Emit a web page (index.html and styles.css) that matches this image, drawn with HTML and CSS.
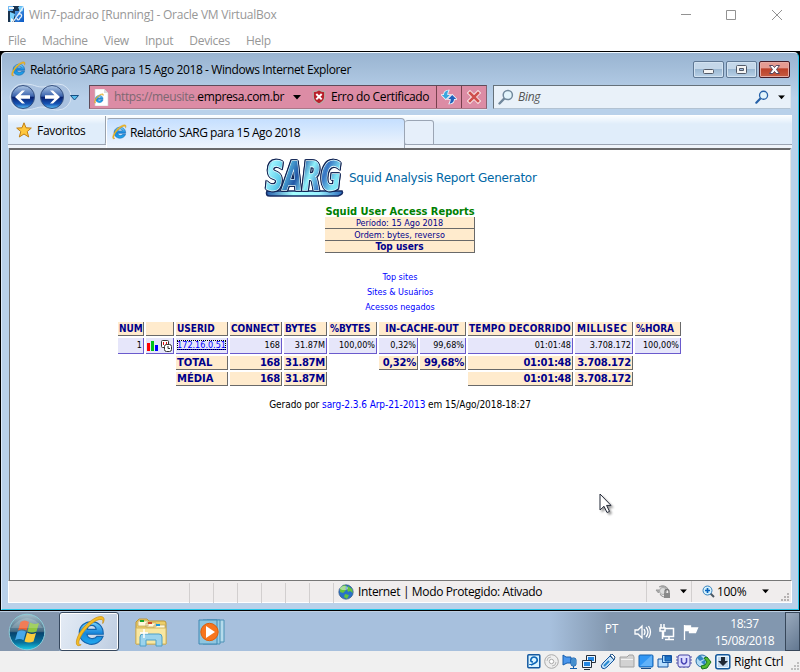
FILE: index.html
```html
<!DOCTYPE html>
<html lang="pt-BR">
<head>
<meta charset="utf-8">
<title>Win7-padrao [Running] - Oracle VM VirtualBox</title>
<link rel="stylesheet" href="styles.css">
</head>
<body>
<svg class="defs" width="0" height="0">
  <defs>
    <linearGradient id="blue" x1="0" y1="0" x2="0" y2="1"><stop offset="0" stop-color="#79d4fb"/><stop offset=".5" stop-color="#1787dc"/><stop offset="1" stop-color="#20a9ee"/></linearGradient>
    <linearGradient id="orb" x1="0" y1="0" x2="0" y2="1"><stop offset="0" stop-color="#b0c9e6"/><stop offset=".47" stop-color="#3a62ad"/><stop offset=".5" stop-color="#081f6e"/><stop offset=".8" stop-color="#1654b5"/><stop offset="1" stop-color="#5fc6fa"/></linearGradient>
    <linearGradient id="start" x1="0" y1="0" x2="0" y2="1"><stop offset="0" stop-color="#a5bdc9"/><stop offset=".48" stop-color="#456b83"/><stop offset=".52" stop-color="#07436d"/><stop offset=".8" stop-color="#08739e"/><stop offset="1" stop-color="#1ccfea"/></linearGradient>
    <linearGradient id="sarg" x1="0" y1="0" x2="1" y2=".25"><stop offset="0" stop-color="#1554a4"/><stop offset=".13" stop-color="#9cf4ff"/><stop offset=".3" stop-color="#5ecaea"/><stop offset=".5" stop-color="#2257a6"/><stop offset=".66" stop-color="#8ff2fb"/><stop offset=".84" stop-color="#3674c4"/><stop offset="1" stop-color="#80e5f5"/></linearGradient>
    <linearGradient id="bar" x1="0" x2="1"><stop offset="0" stop-color="#275baa"/><stop offset=".35" stop-color="#a5ffff"/><stop offset=".7" stop-color="#9af0ff"/><stop offset="1" stop-color="#2869bb"/></linearGradient>
    <linearGradient id="app" x1="0" y1="0" x2="1" y2="1"><stop offset="0" stop-color="#7cc1f6"/><stop offset="1" stop-color="#0758c5"/></linearGradient>
    <symbol id="ie" viewBox="0 0 16 16">
      <path d="M14.600 9.400H6.200c.3 2.700 4 2.800 5.100 1.100h3.200C12.300 16.800 2.300 15.700 2.200 8.500 2.300 1.400 14.700.3 14.600 9.400zM6.300 6.900h4.600C10.600 4.200 6.700 4.100 6.300 6.900z" fill="url(#blue)" stroke="#1665ad" stroke-width=".6" fill-rule="evenodd"/>
      <path d="M3.200 14.800C-.5 17.100-.1 11.200 4.300 6.100 8.100 1.700 13.100-1 14.700.8c.6.8.3 1.900-.4 3.100.2-1.400.1-2-.7-2.100C11 1.200 5.500 5.900 3.100 10.400c-1.500 2.800-1.600 4.700.1 4.400z" fill="#f3bd25" stroke="#c88a0f" stroke-width=".35"/>
    </symbol>
    <symbol id="lens" viewBox="0 0 16 16"><path d="M1.500 14.500L6.400 9.400" fill="none" stroke="currentColor" stroke-width="2.4" stroke-linecap="round"/><circle cx="9.800" cy="6" r="4.600" fill="#e2f4fc" stroke="currentColor" stroke-width="1.500"/></symbol>
    <symbol id="down" viewBox="0 0 8 5"><path d="M0 0h8L4 4.600z"/></symbol>
  </defs>
</svg>

<header class="vm-title">
  <svg class="vm-icon" width="16" height="16" viewBox="0 0 16 16"><path d="M0 0h16v16H0z" fill="url(#app)"/><path d="M0 5h7v11H0zM5 0h6v5H5z" fill="#19334f"/><path d="M2 6l5 2-2 7-3 1zM10 1l5-1v5l-3 1z" fill="#79d0fc"/><path d="M1 1h5v2H1zM3 12l3 2-2 2H3z" fill="#f2f7f9"/><path d="M16 0L5 16M10 9c3-3 5 1 2 3-1 3-3 2-3 0" fill="none" stroke="#e3effa" stroke-width="1.300"/></svg>
  <span class="vm-name">Win7-padrao [Running] - Oracle VM VirtualBox</span>
  <svg class="vm-controls" width="104" height="12" viewBox="0 0 104 12" fill="none" stroke="#929292"><path d="M1 5.500h10M46.500 1.500h9v9h-9zM92 1l10 10M102 1L92 11"/></svg>
</header>
<nav class="vm-menu"><span>File</span><span>Machine</span><span>View</span><span>Input</span><span>Devices</span><span>Help</span></nav>

<main class="guest">
  <section class="browser">
    <div class="win-title">
      <svg width="15" height="16"><use href="#ie"/></svg>
      <span class="win-name">Relatório SARG para 15 Ago 2018 - Windows Internet Explorer</span>
      <div class="win-controls">
        <i class="ctl"><svg width="29" height="15"><rect x="9.500" y="7.500" width="10" height="4" rx="1" fill="#f4f4f4" stroke="#525a68"/></svg></i>
        <i class="ctl"><svg width="29" height="15"><rect x="9.500" y="3.500" width="10" height="8" rx="1" fill="#f4f4f4" stroke="#525a68"/><path d="M12.500 6.500h4v2h-4z" fill="#9dbbe0" stroke="#525a68"/></svg></i>
        <i class="ctl close"><svg width="29" height="15"><path d="M9.500 3.500h3.400L14.500 5.500l1.600-2h3.400l-3 4 3 4h-3.400l-1.600-2-1.600 2H9.500l3-4z" fill="#fff" stroke="#56465f"/></svg></i>
      </div>
    </div>

    <div class="nav">
      <svg class="arrows" width="70" height="28" viewBox="0 0 70 28">
        <path d="M14 1C26 1 26 4 33 4S40 1 49 1a13 13 0 0 1 0 26c-8 0-10-3-16-3s-8 3-19 3A13 13 0 0 1 14 1z" fill="#a9c1df" stroke="#d9e6f4"/>
        <g fill="url(#orb)" stroke="#365180"><circle cx="14" cy="14" r="11.500"/><circle cx="43" cy="14" r="11.500"/></g>
        <path d="M6 14l7-6.500h3l-4.500 4.700H21v3.600h-9.500L16 20.500h-3zM51 14l-7-6.500h-3l4.500 4.700H36v3.600h9.500L41 20.500h3z" fill="#fff"/>
        <path d="M61.500 12.500h8L65.500 17z" fill="#59bdec" stroke="#174f82"/>
      </svg>
      <div class="address">
        <svg class="page-icon" width="15" height="17" viewBox="0 0 15 17"><path d="M1 0h9l4 4v13H1z" fill="#fff" stroke="#ccc" stroke-width=".6"/><path d="M10 0v4h4" fill="#ddd"/><use href="#ie" x="0" y="4" width="10" height="11"/></svg>
        <span class="url"><span>https://meusite.</span>empresa.com.br</span>
        <svg class="url-arrow" width="8" height="5"><use href="#down"/></svg>
        <svg class="shield" width="14" height="16" viewBox="0 0 14 16"><path d="M7 .8c2 1.500 4 1.800 5.800 1.800v5.200c0 3.500-2.200 5.600-5.800 7.400-3.600-1.800-5.800-3.900-5.800-7.400V2.600C3 2.600 5 2.300 7 .8z" fill="#b9202b" stroke="#b9a9a8" stroke-width="1.400"/><path d="M4.300 5l5.400 5.400M9.700 5l-5.400 5.400" stroke="#fff" stroke-width="2"/></svg>
        <span class="cert">Erro do Certificado</span>
        <span class="addr-btn"><svg width="16" height="16" viewBox="0 0 16 16" stroke="#e9f6ff" stroke-width="1.600" paint-order="stroke"><path d="M7.500 1.500C4 1.500 3 4 3 6H.8l4 4 4-4H6.300c0-2 .4-3 1.200-4.500z" fill="#3ba6de"/><path d="M8.500 14.500C12 14.500 13 12 13 10h2.200l-4-4-4 4h2.500c0 2-.4 3-1.200 4.500z" fill="#1f5fba"/></svg></span>
        <span class="addr-btn stop"><svg width="14" height="14" viewBox="0 0 14 14"><path d="M3 3l8 8M11 3l-8 8" stroke="#f8e7e7" stroke-width="4.500" stroke-linecap="square"/><path d="M3 3l8 8M11 3l-8 8" stroke="#cf504e" stroke-width="2.600" stroke-linecap="square"/></svg></span>
      </div>
      <div class="search">
        <svg class="lens-gray" width="16" height="16"><use href="#lens"/></svg><em>Bing</em>
        <svg class="lens-blue" width="14" height="14"><use href="#lens"/></svg><svg class="search-arrow" width="7" height="5" viewBox="0 0 8 5"><use href="#down"/></svg>
      </div>
    </div>

    <div class="tabs">
      <div class="favorites"><svg width="16" height="16" viewBox="0 0 16 16"><path d="M8 .8l2 5 5.300.3-4.100 3.400 1.500 5.500L8 12l-4.700 3 1.500-5.500L.7 6.100 6 5.800z" fill="#ffc83d" stroke="#bf7e14"/></svg><span>Favoritos</span></div>
      <div class="tab"><svg width="15" height="16"><use href="#ie"/></svg><span>Relatório SARG para 15 Ago 2018</span></div>
      <div class="new-tab"></div>
    </div>

    <article class="page">
      <div class="brand">
        <svg width="82" height="50" viewBox="0 -6 82 50">
          <path d="M3 33Q1 38 6 38H74Q80 36 78 33z" fill="url(#bar)" stroke="#162c64" stroke-width="1.600"/>
          <text class="sarg-letters" x="2" y="32" textLength="75" lengthAdjust="spacingAndGlyphs">SARG</text>
        </svg>
        <span>Squid Analysis Report Generator</span>
      </div>
      <h1>Squid User Access Reports</h1>
      <div class="summary"><div><span>Período: 15 Ago 2018</span></div><div><span class="order">Ordem: bytes, reverso</span></div><div><b>Top users</b></div></div>
      <div class="links"><a>Top sites</a><a>Sites &amp; Usuários</a><a>Acessos negados</a></div>
      <div class="report">
        <b class="h">NUM</b><b class="h"></b><b class="h">USERID</b><b class="h">CONNECT</b><b class="h">BYTES</b><b class="h">%BYTES</b><b class="h cache">IN-CACHE-OUT</b><b class="h tempo">TEMPO DECORRIDO</b><b class="h milli">MILLISEC</b><b class="h">%HORA</b>
        <span class="d">1</span>
        <span class="d icons"><svg width="27" height="13" viewBox="0 0 27 13"><path d="M1 3h3v8H1z" fill="#f00"/><path d="M5 1h3v10H5z" fill="#00c318"/><path d="M9 5h3v6H9z" fill="#00f"/><rect x="15.500" y=".5" width="7" height="7" rx="1" fill="#fff" stroke="#333"/><path d="M17.500 2v3M20.500 2v3" stroke="#d11"/><rect x="18.500" y="4.500" width="7" height="7" rx="2" fill="#fff" stroke="#333"/><path d="M22 6v2.500h2" fill="none" stroke="#333"/></svg></span>
        <span class="d user"><a>172.16.0.51</a></span><span class="d">168</span><span class="d">31.87M</span><span class="d">100,00%</span><span class="d">0,32%</span><span class="d">99,68%</span><span class="d">01:01:48</span><span class="d">3.708.172</span><span class="d">100,00%</span>
        <b class="t label">TOTAL</b><b class="t">168</b><b class="t">31.87M</b><b class="t in">0,32%</b><b class="t">99,68%</b><b class="t">01:01:48</b><b class="t">3.708.172</b>
        <b class="t label">MÉDIA</b><b class="t">168</b><b class="t">31.87M</b><b class="t time">01:01:48</b><b class="t">3.708.172</b>
      </div>
      <p class="generated">Gerado por <a>sarg-2.3.6 Arp-21-2013</a> em 15/Ago/2018-18:27</p>
    </article>

    <footer class="status">
      <i class="wide"></i><i></i><i></i><i></i><i></i><i></i><i></i>
      <div class="zone"><svg width="16" height="16" viewBox="0 0 16 16"><circle cx="8" cy="8" r="7.200" fill="#2872c8" stroke="#35577f" stroke-width=".7"/><path d="M2 4l4-3 3 1-2 2 1 2-3 3-3-1zM10 2l4 3 1 4-3-2-2 1-1-3zM7 10l4 1-2 4-3-2z" fill="#64c43e"/><ellipse cx="6" cy="4" rx="4" ry="2" fill="#fff" opacity=".45"/></svg><span>Internet | Modo Protegido: Ativado</span></div>
      <div class="privacy"><svg width="17" height="16" viewBox="0 0 17 16"><path d="M4 3a6 6 0 0 1 9 2M1 6h5L3.500 9zM5 10a5 5 0 0 0 4 3" fill="#aaa" stroke="#999"/><circle cx="8" cy="7" r="3.500" fill="#ddd" stroke="#aaa"/><path d="M10 9V7.500a2 2 0 0 1 4 0V9" fill="none" stroke="#777" stroke-width="1.300"/><path d="M9 9h6v5H9z" fill="#898989"/></svg><svg width="7" height="5" viewBox="0 0 8 5"><use href="#down"/></svg></div>
      <div class="zoom"><svg width="13" height="13" viewBox="0 0 13 13"><path d="M8 8l4 4" stroke="#4a5864" stroke-width="2"/><circle cx="5.500" cy="5.500" r="4.500" fill="#d5f1fc" stroke="#3781bc"/><path d="M3 5.500h5M5.500 3v5" stroke="#0763bd" stroke-width="1.700"/></svg><span>100%</span><svg class="zoom-arrow" width="7" height="5" viewBox="0 0 8 5"><use href="#down"/></svg></div>
      <svg class="grip" width="9" height="9" fill="#b6b2b2"><path d="M6 0h2v2H6zM3 3h2v2H3zM6 3h2v2H6zM0 6h2v2H0zM3 6h2v2H3zM6 6h2v2H6z"/></svg>
    </footer>
  </section>

  <footer class="taskbar">
    <div class="start"><svg width="38" height="38" viewBox="0 0 38 38"><circle cx="19" cy="19" r="17.800" fill="url(#start)" stroke="#8acbd8"/><path d="M12.500 9q4-3 8.500 0l-2.500 8.500q-4-2.500-8.500 0z" fill="#ed6132"/><path d="M22 9.500q4 2.500 9 .5l-2.500 8.500q-4.500 2-9 0z" fill="#8ec641"/><path d="M9.500 18.800q4-2.500 8.500 0l-2.500 8.500q-4-2.500-8.500 0z" fill="#47a8e8"/><path d="M19 19.500q4 2.500 9 .5l-2.500 8.500q-4.500 2-9 0z" fill="#fbcb3d"/><path d="M3 15q16-20 32 0" fill="#fff" opacity=".18"/></svg></div>
    <div class="task active"><svg width="31" height="31"><use href="#ie"/></svg></div>
    <svg class="explorer" width="34" height="32" viewBox="0 0 34 32"><path d="M3 4l2-2h8l2 2h15q2 0 2 2v21H2V5z" fill="#edce68" stroke="#b9953b"/><path d="M4 4h10v5H4zM12 6h10v4H12zM20 8h11v4H20z" fill="#fff8db" stroke="#baa057" stroke-width=".7"/><path d="M6 3h4v2H6z" fill="#18a52a"/><path d="M14 5h4v2h-4z" fill="#d14727"/><path d="M22 7h4v2h-4z" fill="#1798df"/><path d="M2 11h30v16H2z" fill="#f8e7a1" stroke="#d3b660"/><path d="M6 29V20q0-3 3-3h16q3 0 3 3v9h-6v-6H12v6z" fill="#9bd3ec" stroke="#4c9fc8"/><path d="M10 12v9M6 16h8" stroke="#fff" stroke-width="1.500"/></svg>
    <svg class="player" width="30" height="28" viewBox="0 0 30 28"><path d="M9 2h17v22H9z" fill="#b5dbeb" stroke="#4b91b6"/><path d="M5 2h17v24H5z" fill="#98cee6" stroke="#4b91b6"/><path d="M1 2h18v24H1z" fill="#8fc6df" stroke="#3f88b3"/><circle cx="11.500" cy="14" r="8.700" fill="#f7751d" stroke="#db5f0d"/><path d="M8 8l9 6-9 6z" fill="#fff"/></svg>
    <div class="tray">
      <span class="lang">PT</span>
      <svg width="66" height="18" viewBox="0 0 66 18" fill="none" stroke="#fff" stroke-width="1.300"><path d="M1 7h3l4-4v12l-4-4H1zM10 6q2 3 0 6M12 4q4 5 0 10M14.500 3q4 6 0 12"/><path d="M31.500 5.500h8v8h-10v-5M31 16.500h9M35 13v3M27 1v4M30 1v4M26 5h5v3h-5zM28.500 8v8" stroke-width="1.500"/><path d="M50.500 2v15"/><path d="M50.500 3h6v2h7l-2 4.500h-6v-2h-5" fill="#fff"/></svg>
      <div class="clock"><span>18:37</span><span class="date">15/08/2018</span></div><i></i>
    </div>
  </footer>

  <svg class="pointer" width="14" height="22" viewBox="0 0 14 22"><path d="M1 1v16l4-3.700 3 6.200 2.500-1.100-2.900-6H12z" fill="#fff" stroke="#222837"/></svg>
</main>

<footer class="vm-status">
  <svg width="14" height="15" viewBox="0 0 14 15"><rect x=".8" y=".8" width="12" height="13" rx="1" fill="#d9f3ff" stroke="#1559a0" stroke-width="1.500"/><path d="M4 11l4-2c4-2 2-6-1-6S2 8 6 8M3 11v-1" fill="none" stroke="#0c65b7" stroke-width="1.600"/></svg>
  <svg width="15" height="15" viewBox="0 0 15 15"><circle cx="7.500" cy="7.500" r="6.800" fill="#eee" stroke="#aaa"/><circle cx="7.500" cy="7.500" r="2.200" fill="#fff" stroke="#aaa"/><path d="M3 7q0-4 4-4M12 8q0 4-4 4" fill="none" stroke="#bbb"/></svg>
  <svg width="16" height="16" viewBox="0 0 16 16"><path d="M1 1l3 2h5v6H5l-4 2z" fill="#4a96ec" stroke="#145dac"/><rect x="9" y="4" width="5" height="8" rx="2" fill="#79c1ee" stroke="#145dac"/><path d="M10 6h3M10 8h3M10 10h3M8 14.500h7M11.500 12v2" stroke="#145dac"/></svg>
  <svg width="16" height="16" viewBox="0 0 16 16" stroke="#252d38"><path d="M5.500 1.500h9v7h-9z" fill="#e7f4ff"/><path d="M7 3h6v4H7z" fill="#2385e0" stroke="none"/><path d="M1.500 6.500h9v7h-9z" fill="#e7f4ff"/><path d="M3 8h6v4H3z" fill="#2385e0" stroke="none"/><path d="M3 15.500h6"/></svg>
  <svg width="16" height="16" viewBox="0 0 16 16"><path d="M3 9l7-7 4 4-7 7q-3 3-5 1t1-5z" fill="#c2e1f8" stroke="#12549e"/><path d="M10 1l2-1 3 3-1 3z" fill="#fff" stroke="#194d83"/><path d="M4 12l5-5" stroke="#2688d1" stroke-width="2"/></svg>
  <svg width="16" height="15" viewBox="0 0 16 15"><path d="M1 13V3h7l2-2h4l1 2v10z" fill="#d2d2d2" stroke="#a2a2a2"/><path d="M2 5.500h12" stroke="#f3f3f3"/></svg>
  <svg width="16" height="15" viewBox="0 0 16 15"><rect x="1" y="1" width="14" height="12" rx="1" fill="#3297f4" stroke="#1762ae"/><path d="M14 1v11H2z" fill="#81c5fc" opacity=".6"/><path d="M3 14.500h10" stroke="#1d4c86"/></svg>
  <svg width="16" height="15" viewBox="0 0 16 15" stroke="#1455a1"><path d="M1 5h10v8H1z" fill="#b6deff"/><path d="M5.500 1.500h9v7h-9z" fill="#a6dcff"/><path d="M8 2h6v5H8z" fill="#1b73c8"/></svg>
  <svg width="16" height="15" viewBox="0 0 16 15"><rect x="2" y="1" width="12" height="12" rx="2" fill="#ddddff" stroke="#4545a4"/><path d="M5.500 4v4q2.500 4 5 0V4" fill="none" stroke="#4a46b6" stroke-width="1.500"/><path d="M0 3h2M0 6h2M0 9h2M14 3h2M14 6h2M14 9h2M4 14v-1M8 14v-1M12 14v-1" stroke="#5555aa"/></svg>
  <svg width="17" height="16" viewBox="0 0 17 16"><circle cx="7" cy="7" r="6" fill="#b3dcf4" stroke="#276da6"/><path d="M2 4l3-3 4 4-4 2zM6 8l5-3-1 7z" fill="#3387c2"/><path d="M9 4l3-1 4 5-4 6-5 1-1-3 4-1 2-3z" fill="#54ba2e" stroke="#18741d"/></svg>
  <svg width="16" height="16" viewBox="0 0 16 16"><rect x=".8" y=".8" width="14" height="14" rx="2" fill="#eaf7ff" stroke="#14579b" stroke-width="1.500"/><path d="M3 3h10v10H3z" fill="#c2d8ee"/><path d="M6 3h4v4h3l-5 5-5-5h3z" fill="#202936"/></svg>
  <span>Right Ctrl</span>
  <svg class="vm-grip" width="9" height="9" fill="#bebebe"><path d="M6 0h2v2H6zM3 3h2v2H3zM6 3h2v2H6zM0 6h2v2H0zM3 6h2v2H3zM6 6h2v2H6z"/></svg>
</footer>
</body>
</html>
```
FILE: styles.css
```css
* { box-sizing: border-box; }
body { margin: 0; width: 800px; height: 672px; overflow: hidden; background: #fff; color: #000; font: 12px/16px "Open Sans", sans-serif; }
svg { display: block; flex: none; }
span, b, a, em { white-space: nowrap; }
.defs { position: absolute; }

.vm-title { display: flex; height: 29px; padding: 6px 16px 0 8px; color: #979797; }
.vm-name { margin: 1px 0 0 5px; letter-spacing: -.24px; }
.vm-controls { margin: 3px 0 0 auto; }
.vm-menu { display: flex; gap: 16px; height: 22px; padding: 4px 8px 0; color: #979797; letter-spacing: -.27px; }

.guest { position: relative; height: 600px; background: #000; padding: 1px 1px 0; }
.browser { width: 798px; height: 558px; padding: 0 6px 6px; border: 1px solid #25c6e9; border-top-color: #eff8ff; border-left-color: #dceafa; border-radius: 5px 5px 0 0; background: linear-gradient(#99b4d1 0, #b9d1ea 45px, #b9d1ea 100%); }
.win-title { display: flex; height: 30px; padding: 8px 2px 0 3px; }
.win-name { margin: 1px 0 0 4px; letter-spacing: -.39px; }
.win-controls { display: flex; gap: 2px; margin-left: auto; }
.ctl { width: 31px; height: 17px; border: 1px solid #5f7894; border-radius: 2px; box-shadow: inset 0 0 0 1px #d2e2f1; background: linear-gradient(#c4d7e9 0 48%, #9bb8d3 50%, #b9d1e7); }
.ctl.close { border-color: #451c28; box-shadow: inset 0 0 0 1px #e6aba4; background: linear-gradient(#e59b92 0 40%, #bb4029 45%, #c65c42); }

.nav { display: flex; height: 32px; }
.arrows { margin-left: 1px; }
.address { display: flex; flex: none; align-items: center; width: 398px; height: 24px; margin: 2px 0 0 10px; border: 1px solid #5e4b59; border-right-color: #866371; border-bottom-color: #aa7788; background: #dc8ca5; box-shadow: 0 1px #d9e7f5; }
.address > * { flex: none; }
.page-icon { margin-left: 4px; }
.url { width: 173px; margin-left: 5px; letter-spacing: -.36px; }
.url span { color: #7b6872; }
.url-arrow { margin-left: 6px; }
.shield { margin-left: 11px; }
.cert { width: 100px; margin-left: 5px; letter-spacing: -.36px; }
.addr-btn { display: flex; align-items: center; justify-content: center; height: 22px; width: 25px; margin-left: 5px; border-left: 1px solid #78424e; }
.addr-btn.stop { margin-left: 0; }
.search { display: flex; align-items: center; width: 298px; height: 24px; margin: 2px 0 0 6px; padding: 0 5px 0 4px; border: 1px solid #65717a; border-right-color: #dce6ee; border-bottom-color: #b2c2d2; background: #e9f1f9; }
.search em { margin-left: 4px; color: #555; letter-spacing: -.3px; }
.lens-gray { color: #71889c; }
.lens-blue { margin-left: auto; color: #2661a8; }
.search-arrow { margin-left: 9px; }

.tabs { display: flex; height: 33px; border-top: 1px solid #fff; background: linear-gradient(#fafdff 0, #e0edfa 8px, #e0edfa 28px, #9ba4b2 28px, #9ba4b2 29px, #eff4fa 29px); }
.favorites { display: flex; width: 98px; height: 29px; padding: 6px 0 0 8px; border-right: 1px solid #9aa2ad; border-bottom-right-radius: 3px; }
.favorites span { margin: 1px 0 0 5px; letter-spacing: -.3px; }
.tab { display: flex; width: 299px; height: 30px; margin-top: 2px; padding: 5px 0 0 5px; border: 1px solid #9ba5b4; border-bottom: 0; border-left-color: #fff; border-radius: 4px 4px 0 0; background: linear-gradient(#c5dfff, #eff5fc); }
.tab span { margin: 1px 0 0 3px; letter-spacing: -.46px; }
.new-tab { width: 29px; height: 25px; margin-top: 4px; border: 1px solid #9ba5b4; border-left: 0; border-radius: 3px 3px 0 3px; background: #e6effa; }

.page { height: 432px; margin: 0 1px; border: 1px solid #737373; border-top: 2px solid #69696b; border-right-color: #e4e4e4; border-bottom: 0; background: #fff; color: #00008b; font: 10px/12px "DejaVu Sans Condensed", sans-serif; }
.brand { display: flex; width: 290px; height: 50px; margin-left: 254px; padding-top: 8px; }
.brand > svg { margin-top: -6px; }
.brand > span { margin: 12px 0 0 3px; color: #0067a5; font: 12px/16px "DejaVu Sans", sans-serif; letter-spacing: -.25px; }
.sarg-letters { font: italic bold 39px "DejaVu Sans Condensed", sans-serif; fill: url(#sarg); stroke: #e6fbff; stroke-width: 1.6px; paint-order: stroke; filter: drop-shadow(1px 1px 0 #102454) drop-shadow(-1px 0 0 #102454) drop-shadow(0 -1px 0 #102454); }
.page h1 { display: flex; justify-content: center; width: 150px; height: 12px; margin: 6px 0 -1px 315px; color: green; font: bold 11px/12px "DejaVu Sans Condensed", sans-serif; white-space: nowrap; }
.summary { width: 150px; margin-left: 315px; font-size: 9px; text-align: center; }
.summary div { height: 12px; line-height: 12px; border-bottom: 1px solid #696969; border-right: 1px solid #696969; background: #ffebcd; }
.summary b { font-size: 10px; }
.links { display: flex; flex-direction: column; align-items: center; width: 784px; height: 52px; margin: 17px 0 0 -2px; color: blue; font-size: 9px; line-height: 15px; }
.report { display: grid; grid-template-columns: 26px 28px 52px 52px 43px 48px 39px 46px 105px 58px 46px; grid-template-rows: 14px 16px 14px 14px; gap: 2px; width: 563px; margin-left: 108px; }
.h, .t, .d { display: block; border-right: 1px solid #696969; border-bottom: 1px solid #696969; background: #ffebcd; font-size: 10px; line-height: 13px; padding: 0 1px; text-align: right; }
.h { text-align: left; }
.h.cache { grid-column: span 2; text-align: center; }
.h.tempo { letter-spacing: .2px; }
.h.milli { padding-left: 2px; letter-spacing: .5px; }
.d { background: #e6e6fa; border-color: #6a5acd; color: #000; font-size: 9px; line-height: 15px; }
.d.icons { padding: 2px 0; }
.user a { color: blue; text-decoration: underline; outline: 1px dotted #000; outline-offset: -1px; }
.t { font-family: "DejaVu Sans", sans-serif; letter-spacing: -.27px; }
.t.label { grid-column: 3; text-align: left; letter-spacing: 0; }
.t.in { grid-column: 7; }
.t.time { grid-column: 9; }
.generated { width: 784px; margin: 12px 0 0 -2px; color: #000; text-align: center; font-size: 10px; line-height: 14px; letter-spacing: -.07px; }
.generated a { color: blue; }

.status { display: flex; height: 23px; border: 1px solid #fff; border-top: 1px solid #777; background: #f0eded; }
.status > * { flex: none; }
.status i { width: 24px; height: 20px; margin-top: 2px; border-right: 1px solid #d2cfcf; }
.status i.wide { width: 181px; }
.zone { display: flex; width: 312px; padding: 3px 0 0 4px; }
.zone span { margin-left: 4px; letter-spacing: -.36px; }
.privacy { display: flex; align-items: center; gap: 8px; width: 45px; padding-left: 8px; border-left: 1px solid #d2cfcf; }
.zoom { display: flex; align-items: center; width: 90px; padding-left: 10px; border-left: 1px solid #d2cfcf; }
.zoom span { margin-left: 2px; width: 31px; letter-spacing: -.3px; }
.zoom-arrow { margin-left: 14px; }
.grip { margin-top: 12px; }

.taskbar { display: flex; height: 40px; margin: 1px -1px 0; border-top: 1px solid #bdcfe2; background: linear-gradient(90deg, #8396ad 0 59px, #a7c0dd 60px 550px, #8297af 610px); }
.start { width: 59px; padding: 1px 0 0 8px; }
.task { width: 60px; height: 39px; padding: 3px 0 0 15px; border: 1px solid #36485e; border-radius: 3px; box-shadow: inset 0 0 0 1px #fff; background: linear-gradient(110deg, #e4ebf5, #d2deed 50%, #bdcce0); }
.explorer { margin: 5px 0 0 15px; }
.player { margin: 6px 0 0 30px; }
.tray { display: flex; margin-left: auto; color: #fff; }
.lang { margin: 9px 16px 0 0; letter-spacing: -.3px; }
.tray > svg { margin: 11px 0 0; }
.clock { display: flex; flex-direction: column; align-items: center; width: 65px; margin: 3px 8px 0 12px; }
.clock span { line-height: 17px; letter-spacing: -.4px; }
.tray > i { width: 15px; border: 1px solid #37475a; background: linear-gradient(135deg, #9aaabd, #637891); }
.pointer { position: absolute; left: 599px; top: 442px; filter: drop-shadow(2px 2px 1px #0006); }

.vm-status { display: flex; align-items: center; gap: 3px; height: 21px; padding-left: 527px; background: #f0f0f0; }
.vm-status span { letter-spacing: -.22px; }
.vm-grip { margin: 10px 0 0 5px; }
```
